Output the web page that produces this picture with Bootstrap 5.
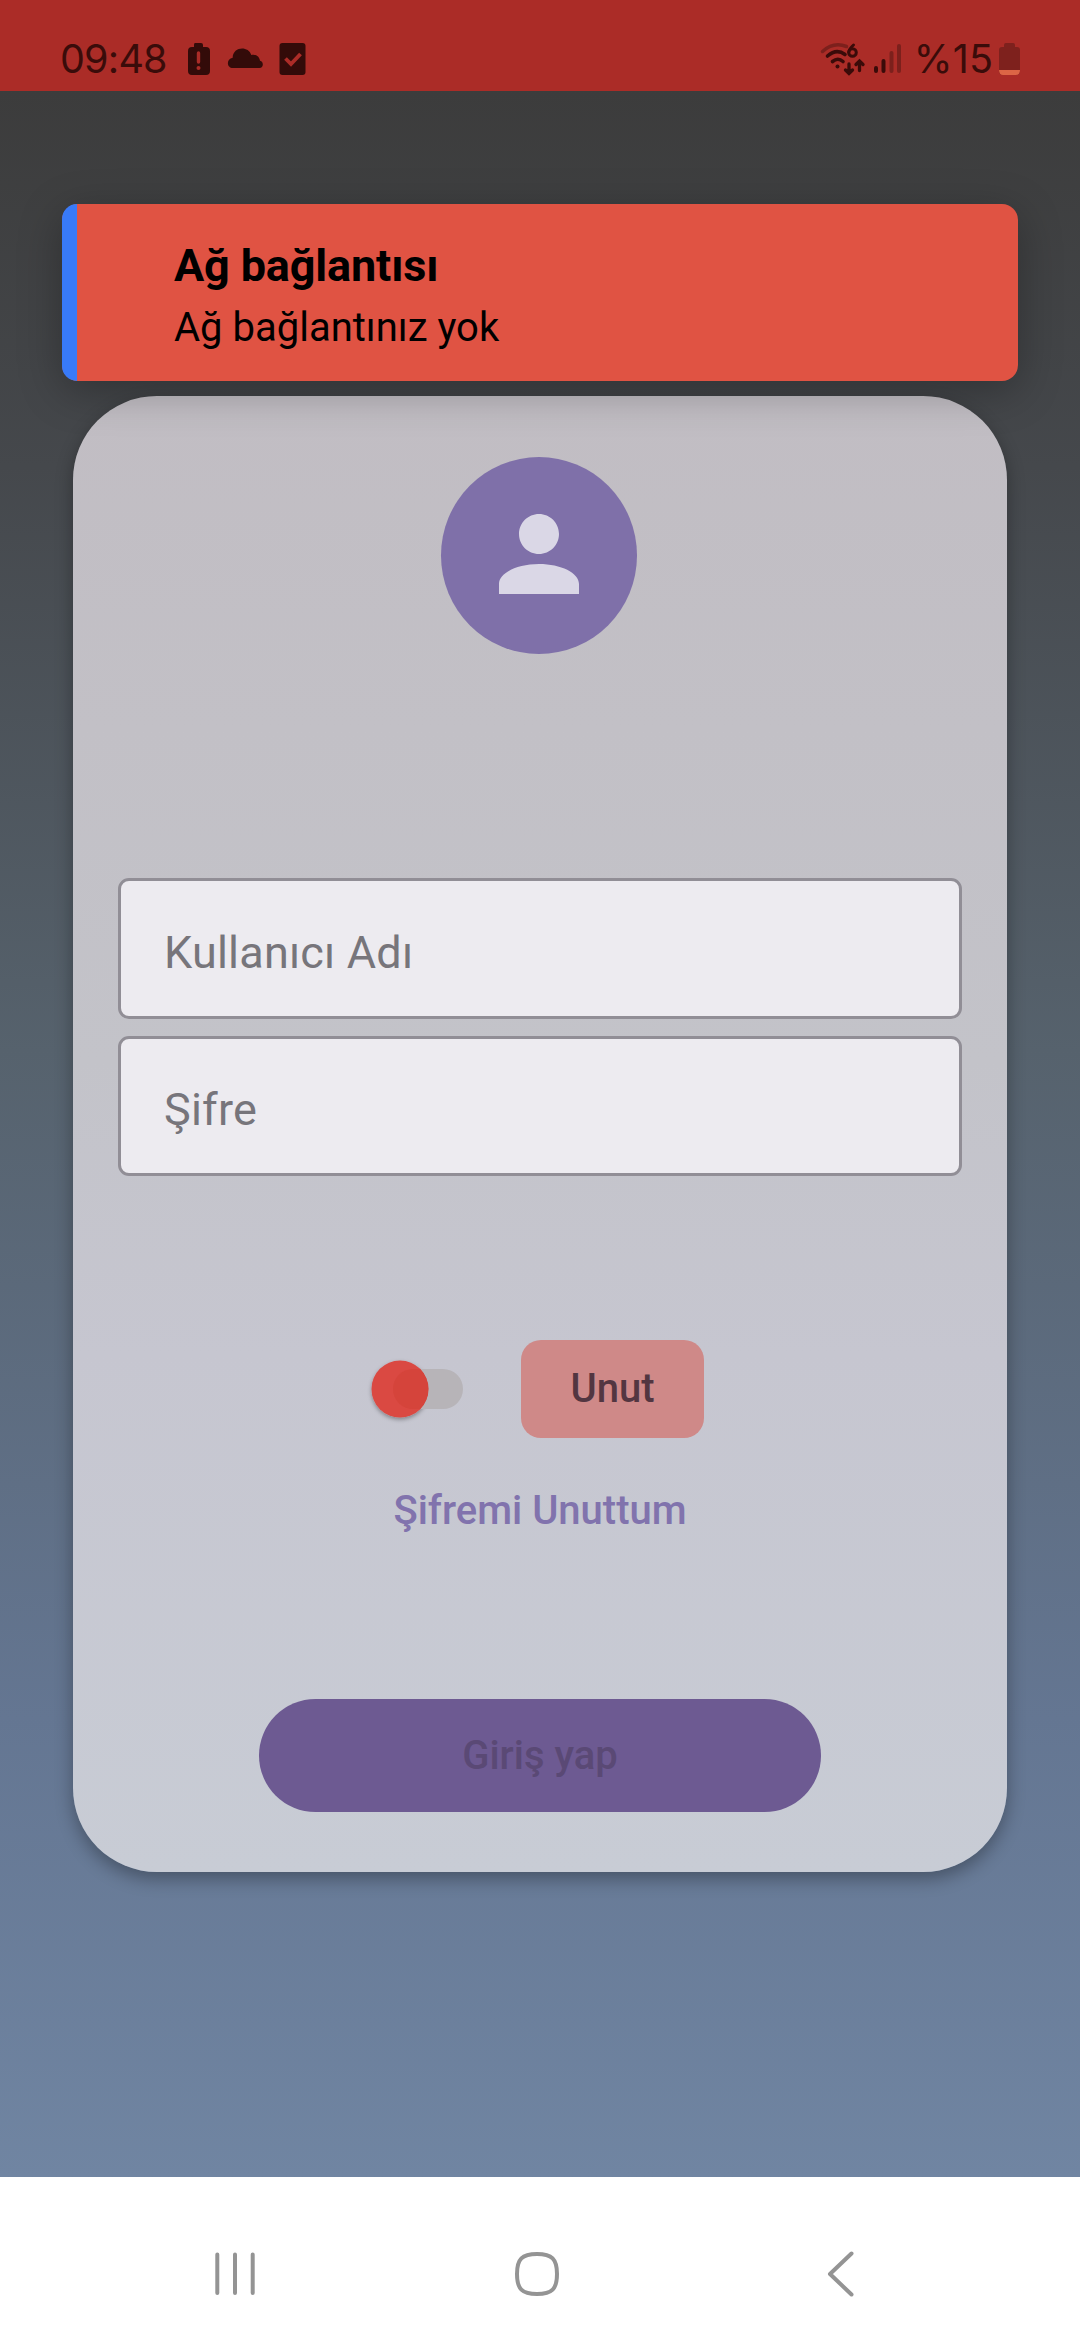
<!DOCTYPE html>
<html lang="tr">
<head>
<meta charset="utf-8">
<meta name="viewport" content="width=device-width, initial-scale=1">
<title>Giriş yap</title>
<link href="https://cdn.jsdelivr.net/npm/bootstrap@5.3.0/dist/css/bootstrap.min.css" rel="stylesheet">
<style>
html,body{height:2340px;overflow:hidden}
body{font-family:Roboto,"Noto Sans",sans-serif;color:#000;background:#fff}
.status-bar{height:91px;background:#ab2c27;padding:27px 59px 0 60px;color:#3a0c0a}
.status-text{font:400 39.5px/64px Inter,Roboto,sans-serif;letter-spacing:-.8px}
.status-charge{letter-spacing:.1px}
.app-screen{height:2086px;background:linear-gradient(#3c3c3c,#45484c 18%,#56626d 46%,#647692 78%,#7085a2)}
.notice{margin:112.500px 62px 0;height:177.500px;border-radius:16px;background:#e05343;border:0;box-shadow:0 10px 44px rgba(0,0,0,.28);z-index:2}
.notice-bar{width:15px;background:#387af8;border-radius:16px 0 0 16px}
.notice-copy{padding:33px 0 0 97px}
.notice-title{font-size:45px;line-height:58px;font-weight:700;letter-spacing:-.15px}
.notice-sub{font-size:40px;line-height:66px}
.login-panel{margin:15px 73px 0;height:1476px;border:0;border-radius:84px;background:linear-gradient(#c1bdc3,#c3c3c9 45%,#c6c6d0 65%,#c8ccd5);box-shadow:0 7px 18px rgba(0,0,0,.32);padding:61px 45px 0}
.avatar-disc{width:196px;height:197px;background:#7f70a9;margin-left:-2px;padding-bottom:3px}
.field-stack{margin-top:224px;gap:17px}
.field-stack .form-control{height:140.500px;border:3px solid #918e96;border-radius:11px;background:#edebf0;font-size:45px;padding:8px 43px 0;letter-spacing:.2px;color:#77757b}
.field-stack .form-control::placeholder{color:#77757b;opacity:1}
.remember-row{margin-top:164px;height:98px;gap:57px;padding-right:6px}
.forget-btn{width:183px;height:98px;border-radius:20px;background:#cf8988;color:#533641;font-size:40px;font-weight:500;border:0;line-height:96px;padding:0}
.forgot-link{margin-top:43px;font-size:40px;line-height:60px;font-weight:500;color:#8173ad;text-decoration:none}
.login-btn{margin-top:158px;width:562px;height:113px;border-radius:57px;background:#6d5a92;color:#5a4975;font-size:40px;font-weight:500;border:0}
.nav-keys{height:163px;background:#fff}
svg{display:block}
</style>
<script src="https://cdn.jsdelivr.net/npm/bootstrap@5.3.0/dist/js/bootstrap.bundle.min.js"></script>
</head>
<body class="d-flex flex-column">
<header class="status-bar d-flex justify-content-between align-items-start flex-shrink-0">
  <div class="d-flex">
    <span class="status-text">09:48</span>
    <svg width="140" height="64" viewBox="167 27 140 64" fill="#330b09">
      <path d="M195 43h6q2 0 2 2v2h3q4 0 4 4v20q0 4-4 4h-14q-4 0-4-4V51q0-4 4-4h2v-2q0-2 1-2z"/>
      <path d="M198.500 53v9" stroke="#ab2c27" stroke-width="3.400" stroke-linecap="round"/><circle cx="198.500" cy="68" r="2" fill="#ab2c27"/>
      <path d="M233 68c-6.500 0-7-9-.3-10.200C232.500 47 248 45 251.300 55c4.500-1 8.200 1.500 8.700 5.800 3.800.7 4 7.200-.7 7.200z"/>
      <rect x="279.500" y="43" width="26" height="32" rx="3"/>
      <path d="M285.500 58.500l5.500 5.500 9.500-10" fill="none" stroke="#ab2c27" stroke-width="3.800"/>
    </svg>
  </div>
  <div class="d-flex">
    <svg width="94" height="64" viewBox="820 27 94 64" fill="none" stroke="#3a0b09" stroke-width="3.600" stroke-linecap="round">
      <path d="M822.500 51.500q11-10 24-5" stroke="#7c201c" stroke-width="3.500"/>
      <path d="M827.500 56q9-8 17.500-1.500M832.500 61.500q5.500-4.500 10.500 0"/>
      <circle cx="837.500" cy="66.500" r="2" fill="#3a0b09" stroke="none"/>
      <path d="M853.500 45q-4.500 4-4.700 7.200" stroke-width="3"/><circle cx="852.500" cy="52.500" r="3.800" stroke-width="3"/>
      <path d="M849 64v9M845.500 70l3.500 3.500 3.500-3.500M859.500 70.500v-9M856 64.500l3.500-3.500 3.500 3.500" stroke-width="3.300"/>
      <path d="M876 68v3M883.500 61v10" stroke-width="4"/>
      <path d="M891.500 53v18M899 46v25" stroke="#7c201c" stroke-width="4"/>
    </svg>
    <span class="status-text status-charge">%15</span>
    <svg width="28" height="64" viewBox="993 27 28 64"><path d="M1006 43h7q2 0 2 2v2h2q3 0 3 3v21q0 4-4 4h-13q-4 0-4-4V50q0-3 3-3h2v-2q0-2 2-2z" fill="#7e211d"/><path d="M999 70h21q0 5-4 5h-13q-4 0-4-5z" fill="#dc6545"/></svg>
  </div>
</header>
<main class="app-screen d-flex flex-column flex-shrink-0">
  <section class="notice card flex-row">
    <div class="notice-bar"></div>
    <div class="notice-copy">
      <div class="notice-title">Ağ bağlantısı</div>
      <div class="notice-sub">Ağ bağlantınız yok</div>
    </div>
  </section>
  <form class="login-panel card align-items-center">
    <div class="avatar-disc rounded-circle d-flex align-items-center justify-content-center">
      <svg width="120" height="120" viewBox="0 0 24 24" fill="#dad7e6"><path d="M12 12c2.210 0 4-1.790 4-4s-1.790-4-4-4-4 1.790-4 4 1.790 4 4 4zm0 2c-4.400 0-8 1.790-8 4v2h16v-2c0-2.210-3.600-4-8-4z"/></svg>
    </div>
    <div class="field-stack d-flex flex-column w-100">
      <input class="form-control" type="text" placeholder="Kullanıcı Adı">
      <input class="form-control" type="text" placeholder="Şifre">
    </div>
    <div class="remember-row d-flex align-items-center">
      <svg width="94" height="74" viewBox="0 0 94 74" overflow="visible">
        <defs><filter id="knob" x="-30%" y="-30%" width="160%" height="170%"><feDropShadow dx="0" dy="2" stdDeviation="2" flood-color="#000" flood-opacity=".35"/></filter></defs>
        <circle cx="30" cy="37" r="28.500" fill="#da4943" filter="url(#knob)"/>
        <path d="M43 17H73a20 20 0 0 1 0 40H50.300A28.500 28.500 0 0 0 50.300 17z" fill="#b7b4b8"/>
        <path d="M50.300 17A28.500 28.500 0 0 1 50.300 57H43a20 20 0 0 1 0-40z" fill="#d5443b"/>
      </svg>
      <button type="button" class="btn forget-btn">Unut</button>
    </div>
    <a class="forgot-link" href="#">Şifremi Unuttum</a>
    <button type="button" class="btn login-btn">Giriş yap</button>
  </form>
</main>
<footer class="nav-keys flex-shrink-0">
  <svg width="1080" height="163" viewBox="0 2177 1080 163" fill="none" stroke="#949494" stroke-width="4" stroke-linecap="round" stroke-linejoin="round">
    <path d="M217.300 2254.500v38.500M235 2254.500v38.500M252.700 2254.500v38.500"/>
    <path d="M537 2254c15 0 20 5 20 20s-5 20-20 20-20-5-20-20 5-20 20-20z"/>
    <path d="M851.500 2253.500L830 2274l21.500 20.500"/>
  </svg>
</footer>
</body>
</html>
